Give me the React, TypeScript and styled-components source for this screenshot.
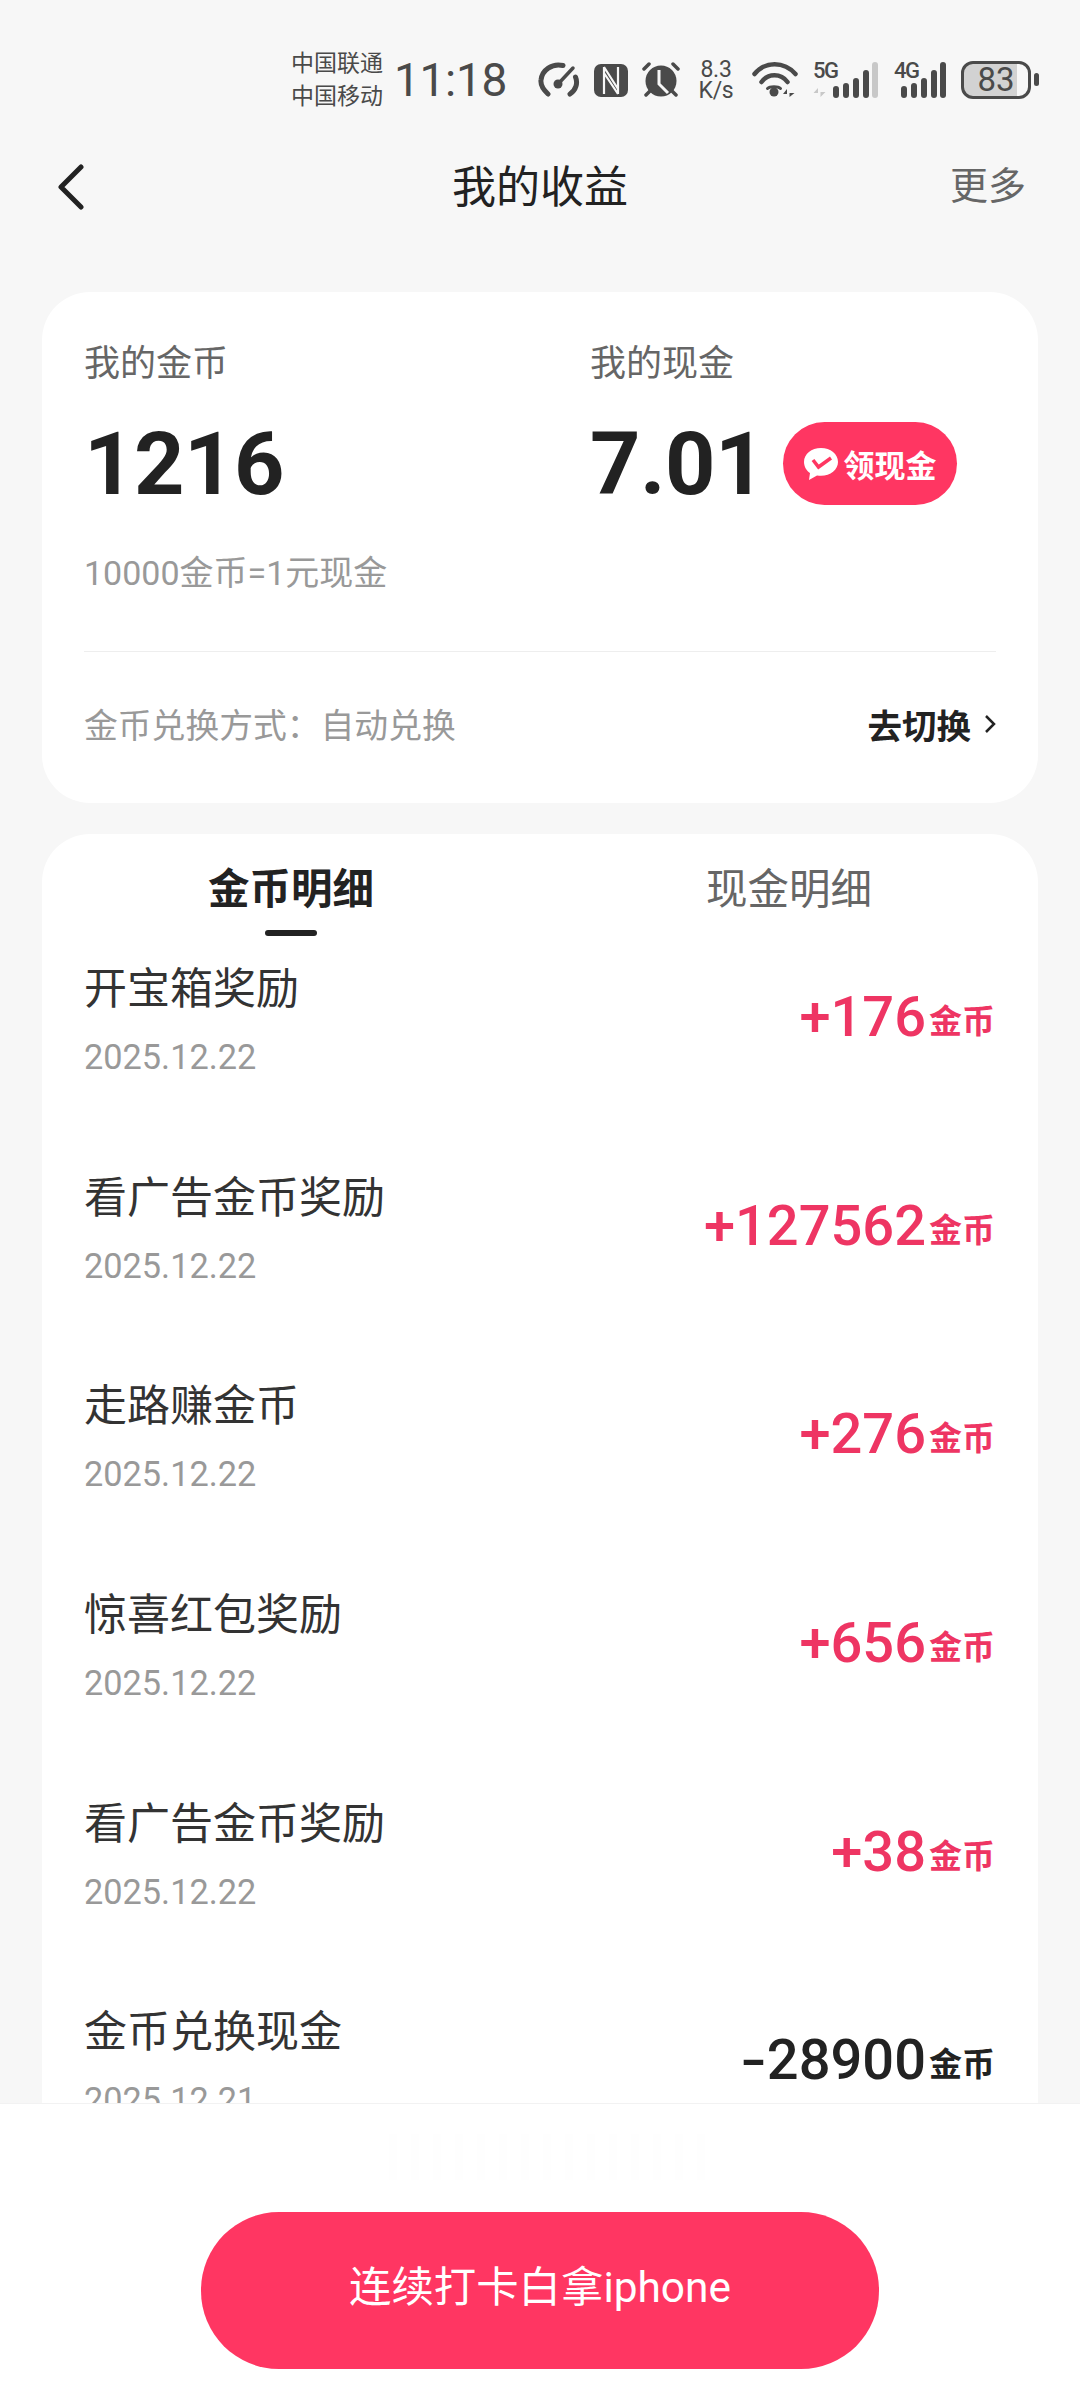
import React from 'react';
import styled, {createGlobalStyle} from 'styled-components';

const FONT = `Roboto, "Noto Sans CJK SC", sans-serif`;
const ICON = '#4a4a4a';

const GlobalStyle = createGlobalStyle`
    html, body {
        margin: 0;
        padding: 0;
        background: #f7f7f7;
    }
`

const records = [
    {title: '开宝箱奖励', date: '2025.12.22', amount: '+176', income: true},
    {title: '看广告金币奖励', date: '2025.12.22', amount: '+127562', income: true},
    {title: '走路赚金币', date: '2025.12.22', amount: '+276', income: true},
    {title: '惊喜红包奖励', date: '2025.12.22', amount: '+656', income: true},
    {title: '看广告金币奖励', date: '2025.12.22', amount: '+38', income: true},
    {title: '金币兑换现金', date: '2025.12.21', amount: '-28900', income: false},
];

const GaugeIcon = () => (
    <svg width="42" height="36" viewBox="0 0 42 36" fill="none" stroke={ICON} strokeLinecap="round">
        <path d="M10 32C4.500 27 2.500 22 3 18C4 8 14 1 25 3.500" strokeWidth="5"/>
        <path d="M32 32C38 28 40 21 37.500 15" strokeWidth="5"/>
        <path d="M21 21L35 6" strokeWidth="3.500"/>
        <circle cx="20" cy="22" r="4.500" fill={ICON} stroke="none"/>
    </svg>
);

const NfcIcon = () => (
    <svg width="34" height="33" viewBox="0 0 34 33">
        <rect width="34" height="33" rx="7" fill={ICON}/>
        <path d="M10 3V30M24 3V30M10 3L24 25M10 9L24 30" fill="none" stroke="#f7f7f7" strokeWidth="2.200"/>
    </svg>
);

const AlarmIcon = () => (
    <svg width="38" height="36" viewBox="0 0 38 36">
        <circle cx="19" cy="19" r="15.500" fill={ICON}/>
        <path d="M2 7L7 2M36 7L31 2M4 33L8 29M34 33L30 29" stroke={ICON} strokeWidth="3.500" strokeLinecap="round"/>
        <path d="M17 8V22L26 31" fill="none" stroke="#f7f7f7" strokeWidth="3"/>
    </svg>
);

const WifiIcon = () => (
    <svg width="46" height="36" viewBox="0 0 46 36" fill="none" stroke={ICON} strokeLinecap="round">
        <path d="M2.500 12C13 -1 32 -1 43.500 12" strokeWidth="4.500"/>
        <path d="M9.500 20C16 11 29 11 35.500 20" strokeWidth="4.500"/>
        <circle cx="22" cy="30" r="4.500" fill={ICON} stroke="none"/>
        <path d="M15.500 26.500C18 24 26 24 28.500 26.500" strokeWidth="3"/>
        <path d="M35 35V27L31 32H35ZM37.500 27V35L42.500 31H37.500Z" fill={ICON} stroke="none"/>
    </svg>
);

const SignalBars = ({muted}: {muted?: boolean}) => {
    const offset = muted ? 21 : 8;
    return (
        <svg width={offset + 46} height="36" viewBox={`0 0 ${offset + 46} 36`} fill="none" strokeWidth="6" strokeLinecap="round" stroke={ICON}>
            <g transform={`translate(${offset} 0)`}>
                <path d="M3 27V33M13 24V33M23 19V33M33 11V33"/>
                <path d="M42 3V33" stroke={muted ? '#c8c8c8' : ICON}/>
            </g>
            {muted && <path d="M6 35V26L1.500 31H6ZM8.500 26V35L13.500 30H8.500Z" fill="#c8c8c8" stroke="none"/>}
        </svg>
    );
};

export default function App() {
    return (
        <Page>
            <GlobalStyle/>
            <StatusBar>
                <Carriers>
                    <span>中国联通</span>
                    <span>中国移动</span>
                </Carriers>
                <Clock>11:18</Clock>
                <StatusIcons>
                    <GaugeIcon/>
                    <NfcIcon/>
                    <AlarmIcon/>
                    <NetSpeed>
                        <span>8.3</span>
                        <span>K/s</span>
                    </NetSpeed>
                    <WifiIcon/>
                    <SignalGroup>
                        <SignalTag>5G</SignalTag>
                        <SignalBars muted/>
                    </SignalGroup>
                    <SignalGroup>
                        <SignalTag>4G</SignalTag>
                        <SignalBars/>
                    </SignalGroup>
                    <Battery>83</Battery>
                </StatusIcons>
            </StatusBar>

            <Header>
                <BackButton>
                    <svg width="26" height="46" viewBox="0 0 26 46" fill="none">
                        <path d="M23 3L3 23L23 43" stroke="#222" strokeWidth="5" strokeLinecap="round" strokeLinejoin="round"/>
                    </svg>
                </BackButton>
                <Title>我的收益</Title>
                <More>更多</More>
            </Header>

            <SummaryCard>
                <Stats>
                    <div>
                        <StatLabel>我的金币</StatLabel>
                        <StatRow>
                            <StatValue>1216</StatValue>
                        </StatRow>
                        <Rate>10000金币=1元现金</Rate>
                    </div>
                    <div>
                        <StatLabel>我的现金</StatLabel>
                        <StatRow>
                            <StatValue>7.01</StatValue>
                            <CashPill>
                                <svg width="34" height="32" viewBox="0 0 34 32">
                                    <path d="M17 0C7.500 0 0 6 0 14C0 19 3 23 6 25L5 32L13 27.500C14.500 27.700 16 27.800 17 27.800C26.500 27.800 34 21.500 34 14C34 6 26.500 0 17 0Z" fill="#fff"/>
                                    <path d="M9 12L14.500 19L27 10" fill="none" stroke="#ff3662" strokeWidth="3.500"/>
                                </svg>
                                领现金
                            </CashPill>
                        </StatRow>
                    </div>
                </Stats>
                <Divider/>
                <ExchangeRow>
                    <ExchangeMode>金币兑换方式：自动兑换</ExchangeMode>
                    <SwitchLink>
                        去切换
                        <svg width="12" height="20" viewBox="0 0 12 20" fill="none">
                            <path d="M2 2L10 10L2 18" stroke="#222" strokeWidth="2.500"/>
                        </svg>
                    </SwitchLink>
                </ExchangeRow>
            </SummaryCard>

            <DetailCard>
                <Tabs>
                    <Tab $active>金币明细</Tab>
                    <Tab>现金明细</Tab>
                </Tabs>
                {records.map((item, index) => (
                    <Row key={index}>
                        <div>
                            <RowTitle>{item.title}</RowTitle>
                            <RowDate>{item.date}</RowDate>
                        </div>
                        <Amount $income={item.income}>
                            <Sign $minus={!item.income}>{item.amount[0]}</Sign>
                            {item.amount.slice(1)}
                            <Unit>金币</Unit>
                        </Amount>
                    </Row>
                ))}
            </DetailCard>

            <Footer>
                <FooterSmudge/>
                <CheckinButton>连续打卡白拿iphone</CheckinButton>
            </Footer>
        </Page>
    );
}

const Page = styled.div`
    width: 1080px;
    height: 2400px;
    overflow: hidden;
    display: flex;
    flex-direction: column;
    background: #f7f7f7;
    font-family: ${FONT};
`

const StatusBar = styled.div`
    height: 130px;
    box-sizing: border-box;
    padding: 48px 40px 18px 291px;
    display: flex;
    align-items: center;
    color: ${ICON};
    flex-shrink: 0;
`

const Carriers = styled.div`
    width: 103px;
    display: flex;
    flex-direction: column;
    font-size: 23px;
    line-height: 33px;
`

const Clock = styled.div`
    width: 144px;
    font-size: 46px;
    line-height: 64px;
    letter-spacing: -0.3px;
`

const StatusIcons = styled.div`
    display: flex;
    align-items: center;
    height: 64px;
    gap: 14px;
`

const NetSpeed = styled.div`
    width: 36px;
    margin: 0 4px;
    display: flex;
    flex-direction: column;
    align-items: center;
    font-size: 23px;
    line-height: 21px;
    letter-spacing: -0.3px;
`

const SignalGroup = styled.div`
    position: relative;
    display: flex;
    height: 36px;
`

const SignalTag = styled.span`
    position: absolute;
    left: 1px;
    top: -2px;
    font-size: 22px;
    line-height: 22px;
    font-weight: 500;
    letter-spacing: -1.5px;
`

const Battery = styled.div`
    position: relative;
    width: 70px;
    height: 38px;
    box-sizing: border-box;
    border: 3.5px solid ${ICON};
    border-radius: 12px;
    background: linear-gradient(to right, #d2d2d2 83%, #f7f7f7 83%);
    font-size: 33px;
    line-height: 31px;
    text-align: center;

    &::after {
        content: '';
        position: absolute;
        right: -11px;
        top: 9px;
        width: 5px;
        height: 13px;
        border-radius: 3px;
        background: ${ICON};
    }
`

const Header = styled.div`
    height: 110px;
    margin: 0 54px 52px 58px;
    display: flex;
    align-items: center;
    justify-content: space-between;
    position: relative;
    flex-shrink: 0;
`

const BackButton = styled.div`
    display: flex;
    margin-top: 3px;
`

const Title = styled.div`
    position: absolute;
    left: 0;
    right: 0;
    text-align: center;
    margin: -2px 0 0 -4px;
    font-size: 44px;
    color: #222;
`

const More = styled.div`
    margin-top: -5px;
    font-size: 38px;
    color: #666;
`

const SummaryCard = styled.section`
    margin: 0 42px 31px;
    padding: 48px 42px 57px;
    background: #fff;
    border-radius: 48px;
    flex-shrink: 0;
`

const Stats = styled.div`
    display: grid;
    grid-template-columns: 506px 1fr;
`

const StatLabel = styled.div`
    margin-top: 1px;
    margin-bottom: -1px;
    font-size: 36px;
    line-height: 46px;
    color: #666;
`

const StatRow = styled.div`
    height: 83px;
    margin-top: 36px;
    display: flex;
    align-items: center;
    gap: 18px;
`

const StatValue = styled.div`
    font-size: 88px;
    line-height: 83px;
    font-weight: 700;
    letter-spacing: -0.5px;
    color: #222;
`

const CashPill = styled.div`
    height: 83px;
    width: 174px;
    border-radius: 42px;
    background: #ff3662;
    color: #fff;
    display: flex;
    align-items: center;
    justify-content: center;
    gap: 6px;
    font-size: 31px;
    font-weight: 700;
`

const Rate = styled.div`
    margin-top: 46px;
    font-size: 34px;
    line-height: 44px;
    color: #999;
`

const Divider = styled.div`
    margin-top: 56px;
    height: 1px;
    background: #eeeeee;
`

const ExchangeRow = styled.div`
    margin-top: 50px;
    height: 44px;
    display: flex;
    align-items: center;
    justify-content: space-between;
`

const ExchangeMode = styled.div`
    margin-top: -2px;
    font-size: 33.8px;
    color: #999;
`

const SwitchLink = styled.div`
    display: flex;
    align-items: center;
    gap: 13px;
    font-size: 34.5px;
    font-weight: 700;
    color: #222;
`

const DetailCard = styled.section`
    flex: 1;
    min-height: 0;
    overflow: hidden;
    margin: 0 42px;
    padding: 0 42px;
    background: #fff;
    border-radius: 48px 48px 0 0;
`

const Tabs = styled.div`
    display: grid;
    grid-template-columns: 1fr 1fr;
    margin: 0 -42px 22px;
    padding-top: 32px;
`

const Tab = styled.div<{$active?: boolean}>`
    display: flex;
    flex-direction: column;
    align-items: center;
    font-size: 41.5px;
    line-height: 48px;
    font-weight: ${props => props.$active ? 700 : 400};
    color: ${props => props.$active ? '#222' : '#666'};

    &::after {
        content: '';
        width: 52px;
        height: 6px;
        margin-top: 16px;
        border-radius: 3px;
        background: ${props => props.$active ? '#222' : 'transparent'};
    }
`

const Row = styled.div`
    height: 208.7px;
    display: flex;
    align-items: flex-start;
    justify-content: space-between;
`

const RowTitle = styled.div`
    margin-top: 1px;
    font-size: 43px;
    line-height: 60px;
    color: #333;
`

const RowDate = styled.div`
    margin-top: 13px;
    font-size: 34.3px;
    line-height: 50px;
    color: #999;
`

const Amount = styled.div<{$income: boolean}>`
    margin-top: 29px;
    margin-right: 1px;
    font-size: 56px;
    line-height: 60px;
    font-weight: 500;
    color: ${props => props.$income ? '#ee3563' : '#222'};
`

const Sign = styled.span<{$minus: boolean}>`
    display: inline-block;
    transform: ${props => props.$minus ? 'scaleX(1.35)' : 'none'};
    margin-right: ${props => props.$minus ? '4px' : '0'};
`

const Unit = styled.span`
    position: relative;
    top: -3px;
    margin-left: 3px;
    font-size: 33px;
    font-weight: 700;
`

const Footer = styled.div`
    position: relative;
    height: 297px;
    flex-shrink: 0;
    box-sizing: border-box;
    padding-top: 108px;
    background: #fff;
    border-top: 1px solid #f2f2f2;
    display: flex;
    justify-content: center;
    align-items: flex-start;
`

const FooterSmudge = styled.div`
    position: absolute;
    left: 375px;
    top: 30px;
    width: 330px;
    height: 46px;
    background: repeating-linear-gradient(to right, #fff 0 14px, #fefefe 14px 22px);
`

const CheckinButton = styled.div`
    width: 678px;
    height: 157px;
    box-sizing: border-box;
    padding-bottom: 14px;
    border-radius: 78px;
    background: #ff3662;
    color: #fff;
    display: flex;
    align-items: center;
    justify-content: center;
    font-size: 42.4px;
`
